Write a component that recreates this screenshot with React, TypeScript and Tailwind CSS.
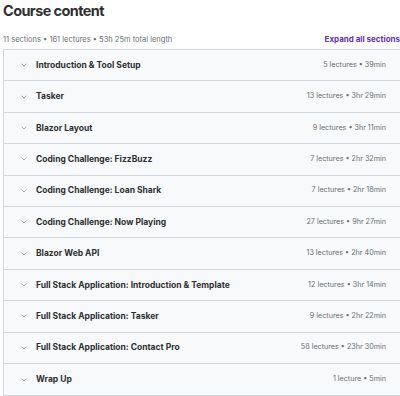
import { FiChevronDown } from "react-icons/fi";

const sections = [
  { title: "Introduction & Tool Setup", meta: "5 lectures • 39min" },
  { title: "Tasker", meta: "13 lectures • 3hr 29min" },
  { title: "Blazor Layout", meta: "9 lectures • 3hr 11min" },
  { title: "Coding Challenge: FizzBuzz", meta: "7 lectures • 2hr 32min" },
  { title: "Coding Challenge: Loan Shark", meta: "7 lectures • 2hr 18min" },
  { title: "Coding Challenge: Now Playing", meta: "27 lectures • 9hr 27min" },
  { title: "Blazor Web API", meta: "13 lectures • 2hr 40min" },
  { title: "Full Stack Application: Introduction & Template", meta: "12 lectures • 3hr 14min" },
  { title: "Full Stack Application: Tasker", meta: "9 lectures • 2hr 22min" },
  { title: "Full Stack Application: Contact Pro", meta: "58 lectures • 23hr 30min" },
  { title: "Wrap Up", meta: "1 lecture • 5min" },
];

export default function App() {
  return (
    <div
      className="w-[400px] h-[396px] bg-white text-[#2d2f31] overflow-hidden"
      style={{ fontFamily: "Inter, 'Noto Sans', sans-serif" }}
    >
      <div className="pl-[3px]">
        <h2 className="pt-[1px] text-[14.5px] font-bold leading-[20px] tracking-[-0.6px]">
          Course content
        </h2>
        <div className="flex items-end justify-between h-[27px] pb-[3px]">
          <span className="text-[7.5px] text-[#6a6f73]">
            11 sections • 161 lectures • 53h 25m total length
          </span>
          <button className="text-[8px] font-bold text-[#6a2cc4]">
            Expand all sections
          </button>
        </div>
        <div className="mt-[1px] border border-[#d1d7dc] border-r-0">
          {sections.map((s, i) => (
            <div
              key={i}
              className="flex items-center h-[31.4px] bg-[#f7f9fa] border-b border-[#d1d7dc] last:border-b-0 pl-[16px] pr-[14px]"
            >
              <FiChevronDown className="w-[8px] h-[8px] text-[#6a6f73] mr-[8px]" strokeWidth={1.8} />
              <span className="flex-1 text-[8.5px] font-bold">{s.title}</span>
              <span className="text-[7.2px] text-[#6a6f73]">{s.meta}</span>
            </div>
          ))}
        </div>
      </div>
    </div>
  );
}
